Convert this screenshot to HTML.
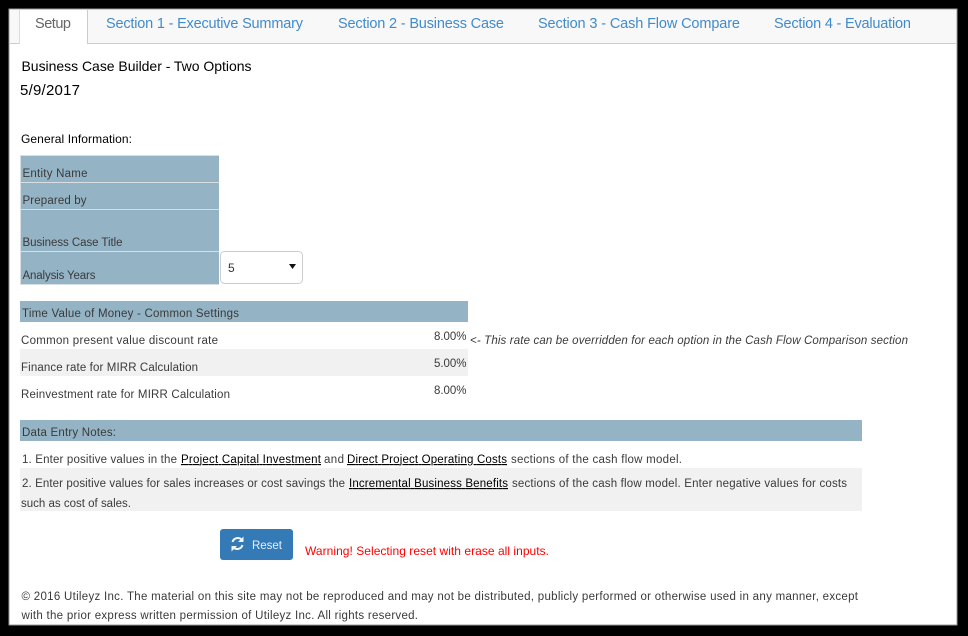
<!DOCTYPE html>
<html><head><meta charset="utf-8"><style>
html,body{margin:0;padding:0;background:#000;width:968px;height:636px;overflow:hidden}
svg{display:block;position:absolute;left:0;top:0}
text{font-family:"Liberation Sans",sans-serif;font-size:11.5px;fill:#3a3a3a;white-space:pre}
.t{font-size:14.5px;fill:#428bca}
.k{fill:#000}
.u{fill:#000;text-decoration:underline}
</style></head><body>
<svg width="968" height="636" viewBox="0 0 968 636">
<rect x="0" y="0" width="968" height="636" fill="#000"/>
<rect x="9" y="9" width="948" height="616" fill="#fff" stroke="#999" stroke-width="1" shape-rendering="crispEdges"/>
<rect x="10" y="10" width="946" height="33" fill="#f8f8f8"/>
<rect x="10" y="43" width="946" height="1" fill="#ccc"/>
<rect x="20" y="10" width="67" height="34" fill="#fff"/>
<rect x="19" y="10" width="1" height="34" fill="#ddd"/>
<rect x="87" y="9" width="1" height="35" fill="#ccc"/>
<text x="35" y="28" textLength="36" style="font-size:14.5px;fill:#666">Setup</text>
<text class="t" x="106" y="28" textLength="197">Section 1 - Executive Summary</text>
<text class="t" x="338" y="28" textLength="166">Section 2 - Business Case</text>
<text class="t" x="538" y="28" textLength="202">Section 3 - Cash Flow Compare</text>
<text class="t" x="774" y="28" textLength="137">Section 4 - Evaluation</text>

<text class="k" x="21.5" y="71" textLength="230" style="font-size:14px">Business Case Builder - Two Options</text>
<text class="k" x="20" y="95" textLength="60" style="font-size:15px">5/9/2017</text>
<text class="k" x="21" y="143" textLength="111" style="font-size:12px">General Information:</text>

<rect x="20" y="155" width="199" height="130" fill="#94b4c6"/>
<path d="M20 155.5H219M20 182.5H219M20 209.5H219M20 251.5H219M20 284.5H219M20.5 155V285" stroke="#d8dfe3" stroke-width="1" fill="none"/>
<text x="22.5" y="177" textLength="65">Entity Name</text>
<text x="22.5" y="204" textLength="64">Prepared by</text>
<text x="22.5" y="246" textLength="100">Business Case Title</text>
<text x="22.5" y="279" textLength="73">Analysis Years</text>
<rect x="220.5" y="251.5" width="82" height="32" rx="4" fill="#fff" stroke="#ccc"/>
<text x="228" y="272" style="font-size:12px;fill:#333">5</text>
<path d="M289 264H296L292.500 269Z" fill="#111"/>

<rect x="20" y="301" width="448" height="21" fill="#94b4c6"/>
<text x="22" y="317" textLength="217">Time Value of Money - Common Settings</text>
<rect x="20" y="349" width="448" height="27" fill="#f1f1f1"/>
<text x="21" y="344" textLength="197">Common present value discount rate</text>
<text x="21" y="371" textLength="177">Finance rate for MIRR Calculation</text>
<text x="21" y="398" textLength="209">Reinvestment rate for MIRR Calculation</text>
<text x="434" y="340" textLength="32.500">8.00%</text>
<text x="434" y="367" textLength="32.500">5.00%</text>
<text x="434" y="394" textLength="32.500">8.00%</text>
<text x="470" y="344" textLength="438" style="font-style:italic">&lt;- This rate can be overridden for each option in the Cash Flow Comparison section</text>

<rect x="20" y="420" width="842" height="21" fill="#94b4c6"/>
<text x="22" y="436" textLength="94">Data Entry Notes:</text>
<text x="22" y="463" textLength="155">1. Enter positive values in the</text>
<text class="u" x="181" y="463" textLength="140">Project Capital Investment</text>
<text x="324" y="463" textLength="20">and</text>
<text class="u" x="347" y="463" textLength="160">Direct Project Operating Costs</text>
<text x="511" y="463" textLength="171">sections of the cash flow model.</text>
<rect x="20" y="468" width="842" height="43" fill="#f1f1f1"/>
<text x="22" y="487" textLength="323">2. Enter positive values for sales increases or cost savings the</text>
<text class="u" x="349" y="487" textLength="159">Incremental Business Benefits</text>
<text x="512" y="487" textLength="335">sections of the cash flow model. Enter negative values for costs</text>
<text x="21" y="507" textLength="110">such as cost of sales.</text>

<rect x="220" y="529" width="73" height="31" rx="3" fill="#337ab7"/>
<g fill="none" stroke="#f2f6fa" stroke-width="2">
<path d="M232.500 542A5.500 5.500 0 0 1 242 540"/>
<path d="M242.500 545A5.500 5.500 0 0 1 233 547"/>
</g>
<path d="M243.500 536.500V542H238ZM231.500 551.500V546H237Z" fill="#f2f6fa"/>
<text x="252" y="549" textLength="30" style="fill:#e8f0f7">Reset</text>
<text x="305" y="555" textLength="244" style="font-size:12px;fill:#f00">Warning! Selecting reset with erase all inputs.</text>

<text x="21.5" y="600" textLength="836.500">© 2016 Utileyz Inc. The material on this site may not be reproduced and may not be distributed, publicly performed or otherwise used in any manner, except</text>
<text x="21.500" y="619" textLength="396.500">with the prior express written permission of Utileyz Inc. All rights reserved.</text>
</svg>
</body></html>
